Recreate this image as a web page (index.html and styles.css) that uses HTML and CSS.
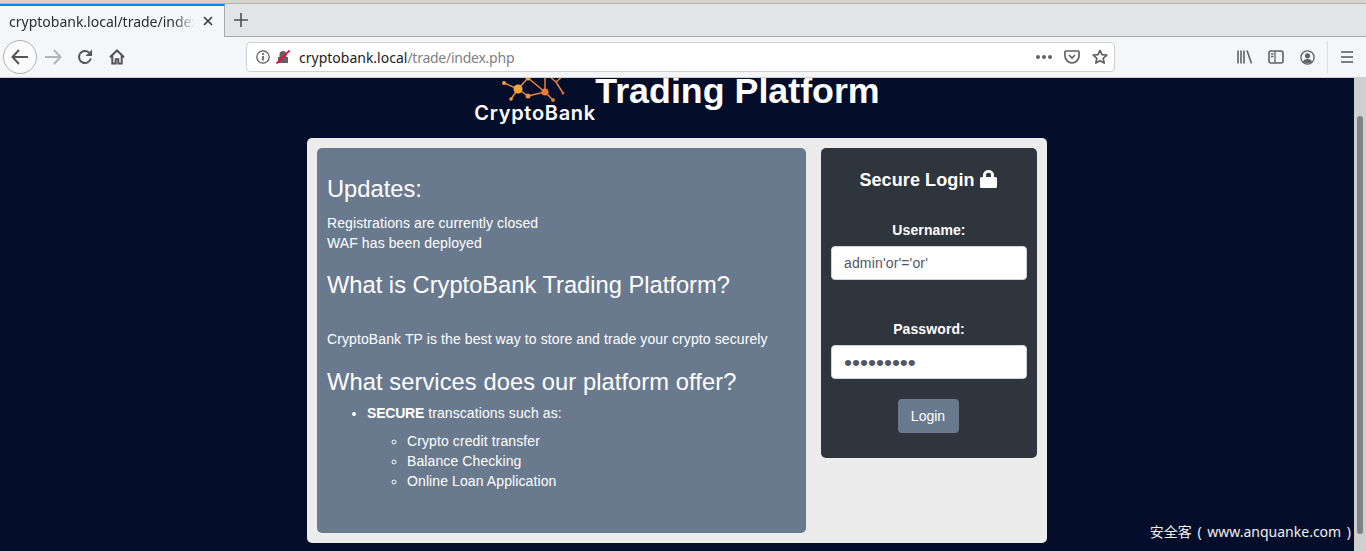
FILE: index.html
```html
<!DOCTYPE html>
<html lang="en">

<head>
    <meta charset="UTF-8">
    <meta name="viewport" content="width=device-width, initial-scale=1.0">
    <title>CryptoBank Trading Platform</title>
    <link rel="stylesheet" href="styles.css">
</head>

<body>
    <div class="top-strip"></div>

    <div class="tabbar">
        <div class="tab">
            <span class="tab-label">cryptobank.local/trade/index.php</span>
            <svg class="tab-close" width="10" height="10" viewBox="0 0 10 10"><path d="M1 1l8 8M9 1L1 9" stroke="#3a3a3e" stroke-width="1.6" fill="none"/></svg>
        </div>
        <svg class="new-tab" width="14" height="14" viewBox="0 0 14 14"><path d="M7 0v14M0 7h14" stroke="#4f4f52" stroke-width="1.6" fill="none"/></svg>
    </div>

    <div class="toolbar">
        <div class="back-btn">
            <svg width="18" height="16" viewBox="0 0 18 16"><path d="M8 1L1.500 8 8 15M2 8h15" stroke="#55555a" stroke-width="2" fill="none"/></svg>
        </div>
        <svg class="forward" width="18" height="16" viewBox="0 0 18 16"><path d="M10 1l6.500 7L10 15M16 8H1" stroke="#b4b4b6" stroke-width="2" fill="none"/></svg>
        <svg class="reload" width="16" height="16" viewBox="0 0 16 16"><path d="M13.800 9.500A6 6 0 1 1 12 3.500" stroke="#55555a" stroke-width="2" fill="none"/><path d="M15 0.500v6.500H8.500z" fill="#55555a"/></svg>
        <svg class="home" width="16" height="16" viewBox="0 0 16 16"><path d="M1 8.200L8 1.500l7 6.700M3.300 6.500v8h3.400v-4.300h2.600v4.300h3.400v-8" stroke="#55555a" stroke-width="2" fill="none"/></svg>

        <div class="urlbar">
            <svg class="info" width="14" height="14" viewBox="0 0 14 14"><circle cx="7" cy="7" r="6.200" stroke="#55555a" stroke-width="1.200" fill="none"/><path d="M7 6v4.500" stroke="#55555a" stroke-width="1.600"/><circle cx="7" cy="3.900" r="1" fill="#55555a"/></svg>
            <svg class="insecure" width="14" height="14" viewBox="0 0 14 14"><path d="M2 13V7h1.500V4.500a3.500 3.500 0 0 1 7 0V7H12v6z" fill="#606065"/><path d="M0.500 13.500L13.500 0.500" stroke="#ff0039" stroke-width="1.800"/></svg>
            <span class="url"><span class="url-host">cryptobank.local</span><span class="url-path">/trade/index.php</span></span>
            <span class="dots">
                <i></i><i></i><i></i>
            </span>
            <svg class="pocket" width="16" height="14" viewBox="0 0 16 14"><path d="M2 1h12a1 1 0 0 1 1 1v4a7 7 0 0 1-14 0V2a1 1 0 0 1 1-1z" stroke="#606065" stroke-width="1.700" fill="none"/><path d="M5 5l3 3 3-3" stroke="#606065" stroke-width="1.700" fill="none"/></svg>
            <svg class="star" width="16" height="16" viewBox="0 0 16 16"><path d="M8 1.300l2 4.400 4.800.5-3.600 3.200 1 4.700L8 11.700l-4.200 2.400 1-4.700L1.200 6.200 6 5.700z" stroke="#606065" stroke-width="1.700" fill="none" stroke-linejoin="round"/></svg>
        </div>

        <div class="tools">
            <svg width="15" height="14" viewBox="0 0 15 14"><path d="M1 0.500v13M4 0.500v13M7 0.500v13M10 0.500l4.500 13" stroke="#606065" stroke-width="1.600" fill="none"/></svg>
            <svg width="16" height="14" viewBox="0 0 16 14"><rect x="1" y="1" width="14" height="12" rx="2" stroke="#606065" stroke-width="1.600" fill="none"/><path d="M7 1v12M3 4h2.500M3 6.500h2.500" stroke="#606065" stroke-width="1.300" fill="none"/></svg>
            <svg width="15" height="15" viewBox="0 0 15 15"><circle cx="7.500" cy="7.500" r="6.600" stroke="#606065" stroke-width="1.300" fill="none"/><circle cx="7.500" cy="5.800" r="2.600" fill="#606065"/><path d="M3 11.500c1-2 2.500-2.600 4.500-2.600s3.500.6 4.500 2.600c-1 1.200-2.700 1.700-4.500 1.700s-3.500-.5-4.500-1.700z" fill="#606065"/></svg>
        </div>
        <div class="tool-sep"></div>
        <svg class="menu" width="12" height="12" viewBox="0 0 12 12"><path d="M0 1h12M0 6h12M0 11h12" stroke="#55555a" stroke-width="1.700" fill="none"/></svg>
    </div>

    <div class="viewport">
        <div class="page">
            <div class="header">
                <div class="logo">
                    <svg class="logo-mark" width="70" height="30" viewBox="0 0 70 30">
                        <path d="M5 11l14 6M19 17l-7 10M19 17l10 7 17-4 8 8M19 17L29 6l17 14M46 20V0M57 10l7 11M57 10l-7-6M57 10l8-7" fill="none" stroke="#f08a3c" stroke-width="1.400"/>
                        <circle cx="5" cy="11" r="2" fill="#f2a03d"/>
                        <circle cx="19" cy="17" r="4.500" fill="#f7a33b"/>
                        <circle cx="12" cy="27" r="1.800" fill="#f2a03d"/>
                        <circle cx="29" cy="24" r="2.500" fill="#f08a3c"/>
                        <circle cx="29" cy="6" r="2.500" fill="#f2a03d"/>
                        <circle cx="46" cy="20" r="3.600" fill="#ee7b34"/>
                        <circle cx="54" cy="28" r="1.900" fill="#ee7b34"/>
                        <circle cx="64" cy="21" r="1.500" fill="#e8642f"/>
                    </svg>
                    <span class="logo-text">CryptoBank</span>
                </div>
                <h1>Trading Platform</h1>
            </div>

            <div class="card">
                <div class="info-panel">
                    <h2 class="first">Updates:</h2>
                    <p>Registrations are currently closed<br>WAF has been deployed</p>
                    <h2 class="about">What is CryptoBank Trading Platform?</h2>
                    <p class="about-text">CryptoBank TP is the best way to store and trade your crypto securely</p>
                    <h2 class="services">What services does our platform offer?</h2>
                    <ul>
                        <li><b>SECURE</b> transcations such as:
                            <ul>
                                <li>Crypto credit transfer</li>
                                <li>Balance Checking</li>
                                <li>Online Loan Application</li>
                            </ul>
                        </li>
                    </ul>
                </div>

                <form class="login-panel">
                    <h3>Secure Login
                        <svg class="lock" width="17" height="18" viewBox="0 0 17 18"><path d="M1.500 7H3V5a5.500 5 0 0 1 11 0v2h1.500A1.500 1.500 0 0 1 17 8.500v8a1.500 1.500 0 0 1-1.500 1.500h-14A1.500 1.500 0 0 1 0 16.500v-8A1.500 1.500 0 0 1 1.500 7zM6 7h5V5a2.500 2.200 0 0 0-5 0z" fill="#fff" fill-rule="evenodd"/></svg>
                    </h3>
                    <label for="username">Username:</label>
                    <input id="username" type="text" value="admin'or'='or'">
                    <label class="pass-label" for="password">Password:</label>
                    <input id="password" type="password" value="aaaaaaaaa">
                    <button type="button">Login</button>
                </form>
            </div>
        </div>

        <div class="scrollbar">
            <div class="thumb"></div>
        </div>

        <div class="watermark">安全客 ( www.anquanke.com )</div>
    </div>
</body>

</html>
```

FILE: styles.css
```css
* {
    padding: 0;
    margin: 0;
    box-sizing: border-box;
}

html,
body {
    height: 100%;
    overflow: hidden;
}

body {
    display: flex;
    flex-direction: column;
    font-family: "Liberation Sans", Arial, sans-serif;
}

.top-strip {
    height: 4px;
    background-color: #d6d2cc;
    border-bottom: 1px solid #b5b2ad;
}

/* tabs */
.tabbar {
    height: 33px;
    display: flex;
    align-items: center;
    background-color: #e3e4e6;
    border-bottom: 1px solid #a9a9ab;
}

.tab {
    width: 225px;
    height: 33px;
    padding: 0 11px 0 9px;
    display: flex;
    align-items: center;
    justify-content: space-between;
    background-color: #f5f6f8;
    border-top: 2px solid #0a84ff;
    border-right: 1px solid #a9a9ab;
    font-family: "Noto Sans", sans-serif;
    font-size: 14px;
    color: #2b2b30;
}

.tab-label {
    width: 186px;
    overflow: hidden;
    white-space: nowrap;
    -webkit-mask-image: linear-gradient(to right, #000 165px, transparent 186px);
    mask-image: linear-gradient(to right, #000 165px, transparent 186px);
}

.new-tab {
    margin-left: 9px;
}

/* toolbar */
.toolbar {
    height: 41px;
    display: flex;
    align-items: center;
    background-color: #f5f6f8;
    border-bottom: 1px solid #cfd0d2;
    padding-left: 3px;
}

.back-btn {
    width: 34px;
    height: 34px;
    display: flex;
    align-items: center;
    justify-content: center;
    background-color: #fbfbfc;
    border: 1px solid #b1b1b3;
    border-radius: 50%;
}

.forward {
    margin-left: 7px;
}

.reload {
    margin-left: 15px;
}

.home {
    margin-left: 16px;
}

.urlbar {
    width: 869px;
    height: 30px;
    margin-left: 121px;
    padding: 0 6px 0 9px;
    display: flex;
    align-items: center;
    background-color: #fff;
    border: 1px solid #cfd0d2;
    border-radius: 4px;
}

.insecure {
    margin-left: 6px;
}

.url {
    margin-left: 9px;
    flex: 1;
    font-family: "Noto Sans", sans-serif;
    font-size: 14px;
    color: #808084;
}

.url-host {
    color: #1c1c20;
}

.url-path {
    letter-spacing: -0.25px;
}

.dots {
    display: flex;
    gap: 2px;
}

.dots i {
    width: 4px;
    height: 4px;
    border-radius: 50%;
    background-color: #606065;
}

.pocket {
    margin-left: 12px;
}

.star {
    margin-left: 12px;
}

.tools {
    margin-left: 122px;
    display: flex;
    align-items: center;
    gap: 16px;
}

.tool-sep {
    width: 1px;
    height: 32px;
    margin-left: 12px;
    background-color: #dcdde0;
}

.menu {
    margin-left: 13px;
}

/* page */
.viewport {
    flex: 1;
    min-height: 0;
    display: flex;
    position: relative;
}

.page {
    flex: 1;
    overflow: hidden;
    background-color: #040e2a;
}

.header {
    height: 60px;
    display: flex;
    justify-content: center;
    align-items: flex-start;
    color: #fff;
}

.logo {
    width: 121px;
    height: 60px;
    display: flex;
    flex-direction: column;
    align-items: flex-start;
}

.logo-mark {
    margin-left: 25px;
    margin-top: -6px;
}

.logo-text {
    margin-top: -1px;
    font-family: Inter, sans-serif;
    font-size: 20px;
    font-weight: 600;
    line-height: 24px;
    letter-spacing: 0.7px;
    white-space: nowrap;
}

h1 {
    font-size: 35.8px;
    font-weight: 700;
    line-height: 26px;
}

.card {
    width: 740px;
    height: 405px;
    margin: 0 auto;
    padding: 10px;
    display: flex;
    align-items: flex-start;
    justify-content: space-between;
    background-color: #ececec;
    border-radius: 5px;
}

.info-panel {
    width: 489px;
    height: 385px;
    padding: 27px 10px 0;
    background-color: #697a8e;
    border-radius: 5px;
    color: #fff;
    font-size: 14px;
    line-height: 20px;
    letter-spacing: 0.1px;
}

.info-panel b {
    letter-spacing: -0.2px;
}

h2 {
    font-size: 23.7px;
    font-weight: 400;
    line-height: 28px;
    letter-spacing: 0;
}

.info-panel p {
    margin-top: 10px;
}

.about {
    margin-top: 18px;
}

.info-panel .about-text {
    margin-top: 30px;
}

.services {
    margin-top: 19px;
    letter-spacing: 0.08px;
}

ul {
    padding-left: 40px;
}

.info-panel > ul {
    margin-top: 7px;
}

.info-panel ul ul {
    margin-top: 8px;
}

.login-panel {
    width: 216px;
    height: 310px;
    padding: 20px 10px 0;
    display: flex;
    flex-direction: column;
    align-items: center;
    background-color: #2f353d;
    border-radius: 5px;
    color: #fff;
}

h3 {
    display: flex;
    align-items: center;
    gap: 5px;
    margin-right: 2px;
    font-size: 18px;
    font-weight: 700;
    line-height: 24px;
    letter-spacing: 0.1px;
}

.lock {
    margin-bottom: 3px;
}

.login-panel label {
    margin-top: 28px;
    font-size: 14px;
    font-weight: 700;
    line-height: 20px;
    letter-spacing: 0.1px;
}

.login-panel .pass-label {
    margin-top: 39px;
}

.login-panel input {
    width: 196px;
    height: 34px;
    margin-top: 6px;
    padding: 0 12px;
    background-color: #fff;
    border: 1px solid #ced4da;
    border-radius: 4px;
    color: #52585f;
    font-family: "Liberation Sans", Arial, sans-serif;
    font-size: 14px;
    letter-spacing: 0.15px;
}

.login-panel #password {
    font-size: 22.8px;
    letter-spacing: 0;
}

.login-panel button {
    width: 61px;
    height: 34px;
    margin-top: 20px;
    margin-right: 2px;
    background-color: #697a8e;
    border: none;
    border-radius: 4px;
    color: #fff;
    font-family: "Liberation Sans", Arial, sans-serif;
    font-size: 14px;
}

.scrollbar {
    width: 12px;
    padding: 38px 3px 0;
    background-color: #cfcfcf;
}

.thumb {
    height: 418px;
    background-color: #7f8384;
    border-radius: 3px;
}

.watermark {
    position: absolute;
    right: 15px;
    bottom: 10px;
    color: #f0f0f0;
    font-family: "Noto Sans", "Noto Sans CJK SC", sans-serif;
    font-size: 14px;
    word-spacing: 2px;
    white-space: nowrap;
}
```
